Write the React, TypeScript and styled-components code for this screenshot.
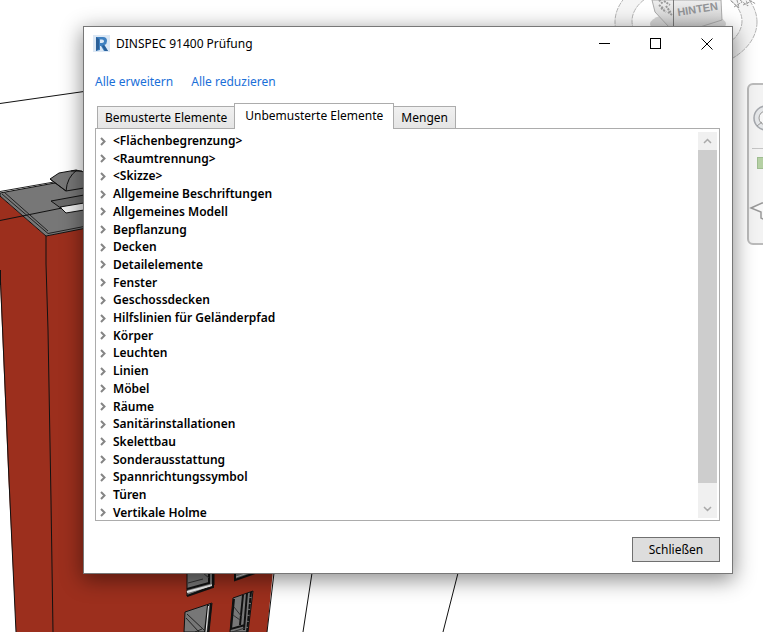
import React, { useState } from "react";
import styled, { createGlobalStyle } from "styled-components";

const GlobalStyle = createGlobalStyle`
  * { box-sizing: border-box; }
  body { margin: 0; background: #fff; }
  button { font: inherit; color: inherit; }
`;

const Desktop = styled.main`
  position: relative;
  display: grid;
  min-height: 100vh;
  padding: 26px 30px 58px 83px;
  overflow: hidden;
  font-family: "Noto Sans", "Open Sans", sans-serif;
  font-size: 12px;
  line-height: 18px;
  color: #000;
`;

const ModelDrawing = styled.svg`
  position: absolute;
  left: 0;
  top: 0;
`;

const ViewCubeDrawing = styled.svg`
  position: absolute;
  right: 0;
  top: 0;
`;

const NavigationBar = styled.svg`
  position: absolute;
  right: 0;
  top: 82px;
`;

const Dialog = styled.section`
  position: relative;
  display: flex;
  flex-direction: column;
  min-width: 0;
  background: #fff;
  border: 1px solid #777;
  box-shadow: 0 5px 20px 1px rgba(0, 0, 0, 0.45);
`;

const TitleBar = styled.header`
  display: flex;
  align-items: center;
  height: 33px;
  padding-left: 9px;
`;

const Title = styled.h1`
  flex: 1;
  margin: 0 0 0 6px;
  font-size: 12px;
  font-weight: 400;
`;

const CaptionButton = styled.button`
  display: grid;
  place-items: center;
  width: 51px;
  height: 32px;
  padding: 0;
  border: 0;
  background: none;
`;

const LinkBar = styled.nav`
  display: flex;
  gap: 18px;
  padding: 13px 11px 0;
`;

const TextLink = styled.a`
  color: #1a6fd8;
  text-decoration: none;
`;

const TabStrip = styled.div`
  display: flex;
  align-items: flex-end;
  height: 26px;
  margin: 11px 11px 0;
  padding-left: 2px;
`;

const Tab = styled.button<{ $active: boolean }>`
  position: relative;
  z-index: ${(p) => (p.$active ? 1 : 0)};
  height: ${(p) => (p.$active ? 26 : 22)}px;
  margin: 0 -1px ${(p) => (p.$active ? -1 : 0)}px 0;
  padding: ${(p) => (p.$active ? "0 10px 2px" : "0 7px")};
  border: 1px solid #acacac;
  border-bottom: 0;
  background: ${(p) => (p.$active ? "#fff" : "linear-gradient(#f0f0f0, #e5e5e5)")};
  white-space: nowrap;
`;

const TreePanel = styled.div`
  display: flex;
  flex: 1;
  margin: 0 12px 0 11px;
  padding: 3px 2px 0;
  border: 1px solid #acacac;
`;

const Tree = styled.ul`
  display: flex;
  flex: 1;
  flex-direction: column;
  justify-content: space-between;
  margin: 0;
  padding: 2px 0 0;
  list-style: none;
`;

const TreeItem = styled.li`
  display: flex;
`;

const Expander = styled.button`
  display: flex;
  align-items: center;
  gap: 5px;
  height: 14px;
  padding: 0 2px;
  border: 0;
  background: none;
  font-weight: 600;
  line-height: 14px;
  white-space: nowrap;
`;

const ScrollBar = styled.div`
  display: flex;
  flex-direction: column;
  width: 19px;
  margin-bottom: 2px;
  background: #f0f0f0;
`;

const ScrollArrow = styled.button`
  display: grid;
  place-items: center;
  height: 18px;
  padding: 0;
  border: 0;
  background: none;
`;

const ScrollTrack = styled.div`
  flex: 1;
`;

const ScrollThumb = styled.div`
  height: 95%;
  background: #cdcdcd;
`;

const Footer = styled.footer`
  display: flex;
  justify-content: flex-end;
  padding: 16px 12px 11px;
`;

const CloseButton = styled.button`
  width: 88px;
  height: 25px;
  padding: 0;
  border: 1px solid #707070;
  background: #ddd;
`;

const categories = [
  "<Flächenbegrenzung>",
  "<Raumtrennung>",
  "<Skizze>",
  "Allgemeine Beschriftungen",
  "Allgemeines Modell",
  "Bepflanzung",
  "Decken",
  "Detailelemente",
  "Fenster",
  "Geschossdecken",
  "Hilfslinien für Geländerpfad",
  "Körper",
  "Leuchten",
  "Linien",
  "Möbel",
  "Räume",
  "Sanitärinstallationen",
  "Skelettbau",
  "Sonderausstattung",
  "Spannrichtungssymbol",
  "Türen",
  "Vertikale Holme",
];

const tabs = ["Bemusterte Elemente", "Unbemusterte Elemente", "Mengen"];

function Model() {
  return (
    <ModelDrawing width="480" height="632" viewBox="0 0 480 632" aria-hidden="true">
      <path d="M0 196 46 236 84 228V560H274L267 632H16L8 470 0 280Z" fill="#9c2f1d" />
      <g fill="none" stroke="#111">
        <path d="M0 103.500 84 91.500M312 573 303 632M458 573 443 632" />
        <path d="M0 270 9 480 16 632M274 573 267 632" />
      </g>
      <path d="M0 193 52 183.500 84 180V228.500L46 236 0 196Z" fill="#777" stroke="#111" />
      <path d="M0 191.500 54 182M2 194 48 233.500 84 226.500M4 192 48 231" fill="none" stroke="#222" />
      <path d="M50 179 59 173 76 170 84 172V188L66 191Z" fill="#777" stroke="#111" />
      <path d="M66 191Q67 177 77 170M50 179 66 191M71 171H82" fill="none" stroke="#111" />
      <path d="M51 201 84 195V205L62 209Z" fill="#686868" stroke="#111" />
      <path d="M60 207 84 203V210L66 213Z" fill="#eee" stroke="#111" />
      <path d="M0 220.500 62 208M46 236V264L48 330 51 500 53 632M.5 270V285" fill="none" stroke="#111" />

      <path d="M187 570H214V585L187 596Z" fill="#777" stroke="#111" />
      <path d="M187 592 213 585V574" fill="none" stroke="#eee" strokeWidth="2" />
      <path d="M187 589 209 583V572M187 596 213 587V573" fill="none" stroke="#111" strokeWidth="2" />
      <path d="M188 583 203 579M203 573 209 578" fill="none" stroke="#333" />
      <path d="M235 573H255L235 580Z" fill="#777" stroke="#111" strokeWidth="2" />
      <path d="M236 577 248 573" stroke="#ccc" />

      <path d="M185 612 212 603 209 632H184Z" fill="#777" stroke="#111" />
      <path d="M208 605 205 632M211 604 208 632" fill="none" stroke="#111" strokeWidth="2" />
      <path d="M208.500 606 206 632" stroke="#eee" />
      <path d="M187 614 204 630M186 618 199 632M195 632 202 629" fill="none" stroke="#222" />
      <path d="M233 598 253 591 248 632H230Z" fill="#777" stroke="#111" />
      <path d="M234 599 231 629 245 625M243 595 240 625M247 593 244 630" fill="none" stroke="#111" strokeWidth="2" />
      <path d="M251 592 247 632" stroke="#111" strokeWidth="2" strokeDasharray="5 1" />
      <path d="M234 607 242 617M233 615 240 620M232 632 245 628" stroke="#333" />
    </ModelDrawing>
  );
}

function ViewCube() {
  return (
    <ViewCubeDrawing width="160" height="80" viewBox="603 0 160 80" aria-hidden="true">
      <defs>
        <linearGradient id="cubeShade" x1="0" y1="0" x2="0" y2="1">
          <stop offset="0" stopColor="#eee" />
          <stop offset="1" stopColor="#ccc" />
        </linearGradient>
      </defs>
      <ellipse cx="686" cy="22" rx="71" ry="48" fill="#f5f5f5" stroke="#b5b5b5" strokeDasharray="5 1" />
      <ellipse cx="687" cy="21" rx="55" ry="34" fill="#fff" stroke="#b5b5b5" strokeDasharray="5 1" />
      <ellipse cx="688" cy="24" rx="38" ry="12" fill="#d5d5d5" />
      <path d="M652 0 655 12 669 27H700L722 20 721 0Z" fill="url(#cubeShade)" stroke="#aaa" />
      <path d="M673.500 0V28" stroke="#777" />
      <path d="M659 0 663 4M659 5 664 9M664 1 670 5M666 6 671 13M661 8 666 12M668 12 672 15" stroke="#999" strokeWidth="2" strokeDasharray="2 1" />
      <text x="678" y="16" fontFamily="Liberation Sans, sans-serif" fontSize="11" fontWeight="700" fill="#929497" transform="rotate(-9 678 16)">HINTEN</text>
      <path d="M731 1 739 8 737 0M740 0 748 6 746 0M749 0 756 4M734 7 742 2M743 5 752 1" fill="none" stroke="#999" strokeDasharray="3 1" />
    </ViewCubeDrawing>
  );
}

function Navigation() {
  return (
    <NavigationBar width="17" height="164" viewBox="746 82 17 164" aria-hidden="true">
      <rect x="748" y="84" width="40" height="160" rx="5" fill="#f3f3f3" stroke="#bbb" strokeWidth="2" />
      <circle cx="766" cy="118" r="12" fill="#e4e6e8" stroke="#a5a8ad" strokeWidth="1.500" />
      <circle cx="766" cy="118" r="7" fill="#f7f7f7" stroke="#999" />
      <path d="M757 126 762 122" stroke="#999" />
      <path d="M752 148.500H763" stroke="#c5c5c5" />
      <rect x="757.500" y="157.500" width="14" height="11" fill="#b5d0a4" stroke="#9fbd91" />
      <path d="M751 208 762 203H775V213L765 213V220L761 218V212Z" fill="#f8f8f8" stroke="#999" strokeWidth="1.500" />
    </NavigationBar>
  );
}

function AppIcon() {
  return (
    <svg width="17" height="17" viewBox="0 0 17 17" aria-hidden="true">
      <rect width="17" height="17" fill="#dce8f5" />
      <path d="M3 2H10Q14 2 14 6 14 9 11.500 10L15 16H11L8 11H7V15L3 16Z" fill="#3f80c0" />
      <path d="M7 4.500H9Q11 4.500 11 6.300 11 8 9 8H7Z" fill="#dce8f5" />
      <path d="M3 2 6 4V14L3 16ZM9 11 11 10 15 16H12Z" fill="#2a5f98" />
    </svg>
  );
}

function Chevron({ up }: { up: boolean }) {
  return (
    <svg width="9" height="6" viewBox="0 0 9 6" aria-hidden="true">
      <path d={up ? "M1 5 4.500 1.500 8 5" : "M1 1 4.500 4.500 8 1"} fill="none" stroke="#aaa" strokeWidth="1.500" />
    </svg>
  );
}

export default function App() {
  const [active, setActive] = useState(1);
  return (
    <Desktop>
      <GlobalStyle />
      <Model />
      <ViewCube />
      <Navigation />
      <Dialog role="dialog" aria-labelledby="dialog-title">
        <TitleBar>
          <AppIcon />
          <Title id="dialog-title">DINSPEC 91400 Prüfung</Title>
          <CaptionButton aria-label="Minimieren">
            <svg width="11" height="11" viewBox="0 0 11 11"><path d="M0 5.500H11" stroke="#000" /></svg>
          </CaptionButton>
          <CaptionButton aria-label="Maximieren">
            <svg width="11" height="11" viewBox="0 0 11 11"><rect x=".5" y=".5" width="10" height="10" fill="none" stroke="#000" /></svg>
          </CaptionButton>
          <CaptionButton aria-label="Fenster schließen">
            <svg width="12" height="12" viewBox="0 0 12 12"><path d="M.5.5 11.500 11.500M11.500.5.5 11.500" stroke="#000" /></svg>
          </CaptionButton>
        </TitleBar>
        <LinkBar>
          <TextLink href="#erweitern">Alle erweitern</TextLink>
          <TextLink href="#reduzieren">Alle reduzieren</TextLink>
        </LinkBar>
        <TabStrip role="tablist">
          {tabs.map((label, i) => (
            <Tab key={label} role="tab" aria-selected={i === active} $active={i === active} onClick={() => setActive(i)}>
              {label}
            </Tab>
          ))}
        </TabStrip>
        <TreePanel role="tabpanel">
          <Tree>
            {categories.map((name) => (
              <TreeItem key={name}>
                <Expander aria-expanded={false}>
                  <svg width="8" height="9" viewBox="0 0 8 9" aria-hidden="true">
                    <path d="M1 1 4.500 4.500 1 8" fill="none" stroke="#858585" strokeWidth="2" />
                  </svg>
                  {name}
                </Expander>
              </TreeItem>
            ))}
          </Tree>
          <ScrollBar>
            <ScrollArrow aria-label="Nach oben"><Chevron up /></ScrollArrow>
            <ScrollTrack><ScrollThumb /></ScrollTrack>
            <ScrollArrow aria-label="Nach unten"><Chevron up={false} /></ScrollArrow>
          </ScrollBar>
        </TreePanel>
        <Footer>
          <CloseButton>Schließen</CloseButton>
        </Footer>
      </Dialog>
    </Desktop>
  );
}
